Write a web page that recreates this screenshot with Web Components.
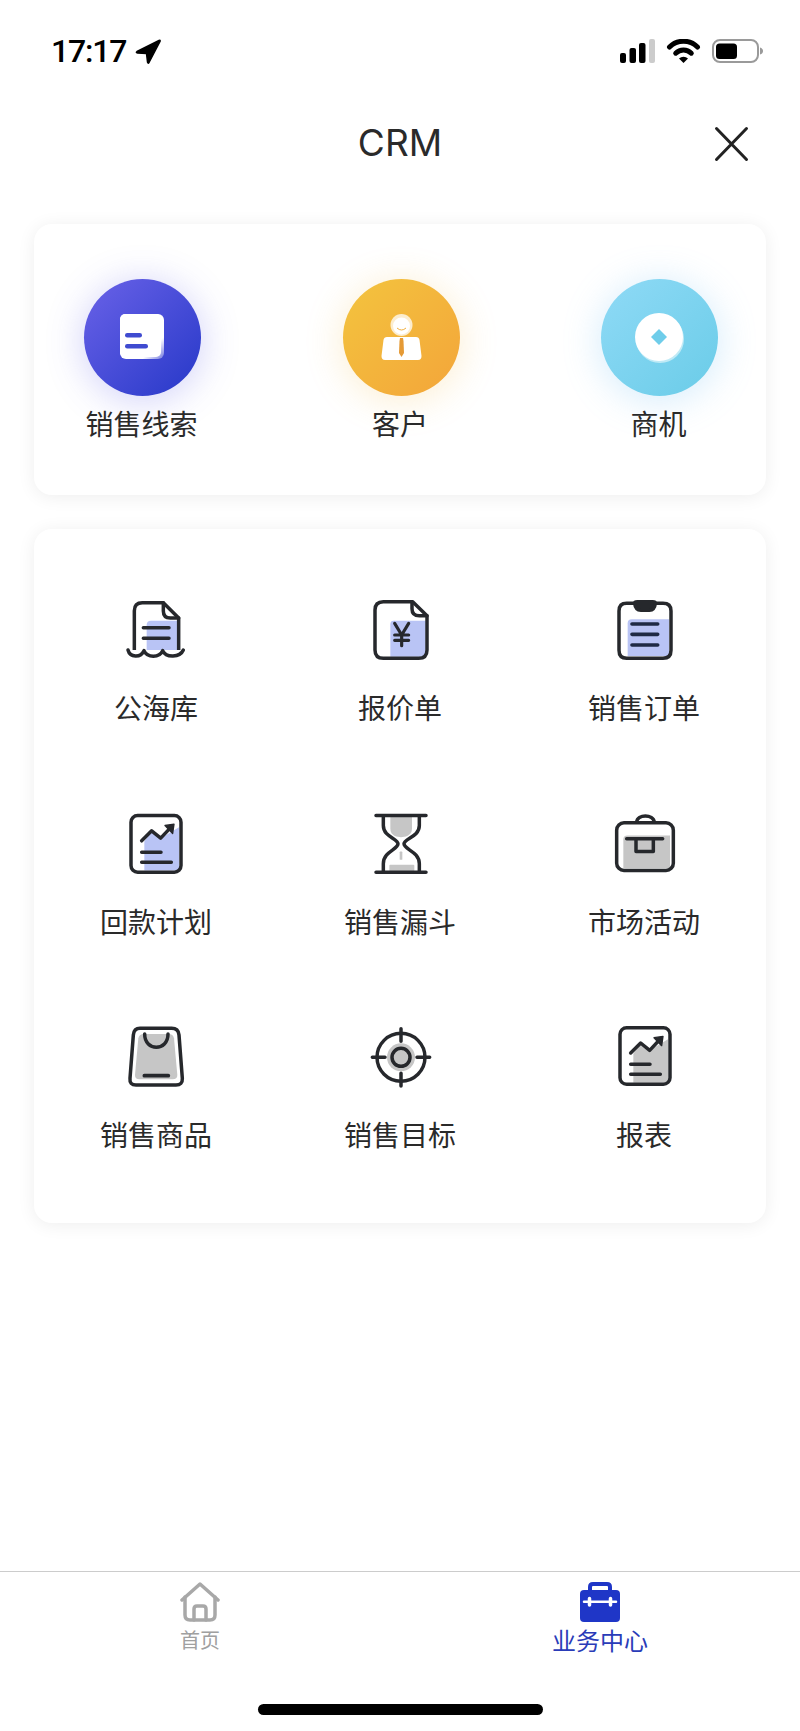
<!DOCTYPE html>
<html lang="zh">
<head>
<meta charset="utf-8">
<title>CRM</title>
<style>
  html, body { margin: 0; background: #fff; }
  body { font-family: "Noto Sans CJK SC", "Liberation Sans", sans-serif; color: #2a2a2a; }
</style>
</head>
<body>
<crm-page>
  <status-bar slot="top" time="17:17"></status-bar>
  <nav-header slot="top" title="CRM"></nav-header>

  <crm-card style="--pad: 55px 48px 52px 50px">
    <div style="display:flex;justify-content:space-between">
      <shortcut-item label="销售线索" tone="indigo">
        <svg width="117" height="117" viewBox="0 0 117 117">
          <defs><linearGradient id="fade" x1="0.75" y1="0.75" x2="1" y2="1"><stop offset="0" stop-color="#fff"/><stop offset="1" stop-color="#fff" stop-opacity=".25"/></linearGradient></defs>
          <rect x="36" y="35" width="44" height="45" rx="6" fill="url(#fade)"/>
          <rect x="36" y="35" width="41" height="43" rx="5" fill="#fff"/>
          <rect x="41" y="54" width="17" height="4.500" rx="2.200" fill="#3f4bd0"/>
          <rect x="41" y="65" width="23" height="4.500" rx="2.200" fill="#3f4bd0"/>
        </svg>
      </shortcut-item>
      <shortcut-item label="客户" tone="amber">
        <svg width="117" height="117" viewBox="0 0 117 117">
          <circle cx="58.500" cy="46" r="11" fill="#fff" opacity=".75"/>
          <circle cx="58.500" cy="47" r="8.500" fill="#fff"/>
          <path d="M54 49q4.500 4 9 0" fill="none" stroke="#f0b040" stroke-width="1"/>
          <path d="M44 58H73Q76 58 76.500 61L78.500 77Q78.500 81 75 81H42Q38.500 81 38.500 77L40.500 61Q41 58 44 58Z" fill="#fff"/>
          <path d="M57 59H60L60.500 62L61 74L58.500 78L56 74L56.500 62Z" fill="#e59a35"/>
        </svg>
      </shortcut-item>
      <shortcut-item label="商机" tone="sky">
        <svg width="117" height="117" viewBox="0 0 117 117">
          <circle cx="59" cy="60" r="24" fill="#bfeaf6"/>
          <circle cx="58" cy="58" r="24" fill="#fff"/>
          <path d="M58 50L66 58L58 66L50 58Z" fill="#6fcdea"/>
        </svg>
      </shortcut-item>
    </div>
  </crm-card>

  <crm-card style="--pad: 51px 0 2px 0">
    <div style="display:grid;grid-template-columns:repeat(3,1fr);grid-auto-rows:213.5px">
      <grid-item label="公海库">
        <svg width="100" height="90" viewBox="18 0 300 270" fill="none" stroke="#26282c" stroke-width="10.500" stroke-linecap="round" stroke-linejoin="round">
          <path d="M140 135Q140 122 153 122H236V222H140Z" fill="#b9c4f5" stroke="none"/>
          <path d="M103 212V92Q103 68 127 68H190L236 114V212"/>
          <path d="M190 68V93Q190 114 211 114H236"/>
          <path d="M130 143H207M130 175H207"/>
          <path d="M84 210C90 233 122 234 132 212C142 234 178 234 188 212C198 234 240 233 250 210" fill="#fff"/>
        </svg>
      </grid-item>
      <grid-item label="报价单">
        <svg width="100" height="90" viewBox="-3 0 300 270" fill="none" stroke="#26282c" stroke-width="10.500" stroke-linecap="round" stroke-linejoin="round">
          <path d="M118 132Q118 122 128 122H224V230H118Z" fill="#b9c4f5" stroke="none"/>
          <path d="M185 65H97Q72 65 72 90V210Q72 235 97 235H203Q228 235 228 210V107Z"/>
          <path d="M183 66V86Q183 107 205 107H228"/>
          <path d="M131 130L152 165L173 130M131 165H173M131 181H173M152 165V197" stroke-width="9.500"/>
        </svg>
      </grid-item>
      <grid-item label="销售订单">
        <svg width="100" height="90" viewBox="-6 0 300 270" fill="none" stroke="#26282c" stroke-width="10.500" stroke-linecap="round" stroke-linejoin="round">
          <path d="M95 130Q95 118 107 118H219V228H95Z" fill="#b9c4f5" stroke="none"/>
          <path d="M115 70H92Q69 70 69 93V211Q69 235 92 235H201Q225 235 225 211V93Q225 70 201 70H178"/>
          <path d="M116 70Q118 90 135 91H160Q176 90 178 70Q178 65 170 65H124Q116 65 116 70Z" fill="#26282c"/>
          <path d="M108 132H185M108 163H185M108 195H185" stroke="#1f2a44" stroke-width="11"/>
        </svg>
      </grid-item>
      <grid-item label="回款计划">
        <svg width="100" height="90" viewBox="18 -4.500 300 270" fill="none" stroke="#26282c" stroke-width="10.500" stroke-linecap="round" stroke-linejoin="round">
          <path d="M133 138L155 106L182 128L237 95V225H133Z" fill="#b9c4f5" stroke="none"/>
          <rect x="93" y="60" width="150" height="170" rx="20"/>
          <path d="M125 136L155 106L182 128L214 94"/>
          <path d="M195 90L222 86L218 114Z" fill="#26282c" stroke-width="4"/>
          <path d="M125 170H183M125 200H214"/>
        </svg>
      </grid-item>
      <grid-item label="销售漏斗">
        <svg width="100" height="90" viewBox="-3 -4.500 300 270" fill="none" stroke="#26282c" stroke-width="10.500" stroke-linecap="round" stroke-linejoin="round">
          <path d="M118 64H183V100C183 122 160 125 150 125C140 125 118 122 118 100Z" fill="#c6c6c6" stroke="none"/>
          <rect x="115" y="208" width="75" height="20" rx="3" fill="#c6c6c6" stroke="none"/>
          <rect x="146" y="168" width="8" height="25" rx="2" fill="#c6c6c6" stroke="none"/>
          <path d="M97 62V90C97 125 141 128 141 145C141 162 97 168 97 205V230"/>
          <path d="M205 62V90C205 125 159 128 159 145C159 162 205 168 205 205V230"/>
          <path d="M75 60H225M75 230H225"/>
        </svg>
      </grid-item>
      <grid-item label="市场活动">
        <svg width="100" height="90" viewBox="-6 -4.500 300 270" fill="none" stroke="#26282c" stroke-width="10.500" stroke-linecap="round" stroke-linejoin="round">
          <path d="M82 132Q82 120 94 120H222V218H82Z" fill="#c6c6c6" stroke="none"/>
          <rect x="62" y="82" width="170" height="143" rx="22"/>
          <path d="M122 80C124 55 172 55 175 80"/>
          <path d="M92 130H200M120 132V168H172V132"/>
        </svg>
      </grid-item>
      <grid-item label="销售商品">
        <svg width="100" height="90" viewBox="18 -9 300 270" fill="none" stroke="#26282c" stroke-width="10.500" stroke-linecap="round" stroke-linejoin="round">
          <path d="M133 72H205Q220 72 222 85L232 195Q232 208 218 208H118Q105 208 105 195L115 85Q117 72 133 72Z" fill="#c6c6c6" stroke="none"/>
          <path d="M120 55H215Q235 55 237 75L247 205Q248 225 228 225H108Q88 225 90 205L100 75Q102 55 120 55Z"/>
          <path d="M134 72C134 125 204 125 204 72"/>
          <path d="M133 197H205" stroke-width="11"/>
        </svg>
      </grid-item>
      <grid-item label="销售目标">
        <svg width="100" height="90" viewBox="-3 -9 300 270" fill="none" stroke="#26282c" stroke-width="10.500" stroke-linecap="round" stroke-linejoin="round">
          <circle cx="150" cy="142" r="42" fill="#c6c6c6" stroke="none"/>
          <circle cx="150" cy="142" r="72"/>
          <circle cx="150" cy="142" r="27"/>
          <path d="M150 56V94M150 190V228M64 142H102M198 142H236"/>
        </svg>
      </grid-item>
      <grid-item label="报表">
        <svg width="100" height="90" viewBox="-6 -9 300 270" fill="none" stroke="#26282c" stroke-width="10.500" stroke-linecap="round" stroke-linejoin="round">
          <g transform="translate(-21 -7)">
            <path d="M133 138L155 106L182 128L237 95V225H133Z" fill="#c6c6c6" stroke="none"/>
            <rect x="93" y="60" width="150" height="170" rx="20"/>
            <path d="M125 136L155 106L182 128L214 94"/>
            <path d="M195 90L222 86L218 114Z" fill="#26282c" stroke-width="4"/>
            <path d="M125 170H183M125 200H214"/>
          </g>
        </svg>
      </grid-item>
    </div>
  </crm-card>

  <tab-bar slot="bottom">
    <tab-item label="首页">
      <svg width="40" height="40" viewBox="0 0 40 40" fill="none" stroke="#a8a8a8" stroke-width="3.500" stroke-linecap="round" stroke-linejoin="round">
        <path d="M2 18L20 2L38 18"/>
        <path d="M5 15V33Q5 38 10 38H30Q35 38 35 33V15"/>
        <path d="M14 38V27Q14 24 17 24H23Q26 24 26 27V38"/>
      </svg>
    </tab-item>
    <tab-item label="业务中心" active>
      <svg width="40" height="40" viewBox="0 0 40 40">
        <path d="M10 10V5Q10 2 13 2H27Q30 2 30 5V10" fill="none" stroke="#1f36c7" stroke-width="4"/>
        <rect x="0" y="8" width="40" height="32" rx="4" fill="#1f36c7"/>
        <path d="M4 19.700H36" stroke="#fff" stroke-width="2.500" stroke-linecap="round"/>
        <path d="M9.500 16.500V23M30.500 16.500V23" stroke="#fff" stroke-width="3.500" stroke-linecap="round"/>
      </svg>
    </tab-item>
  </tab-bar>
</crm-page>

<script>
// page frame: top bars, cards in the middle, tab bar at the bottom
class CrmPage extends HTMLElement {
  constructor() {
    super();
    this.attachShadow({ mode: "open" }).innerHTML = `
      <style>
        :host { display: flex; flex-direction: column; width: 800px; height: 1731px; overflow: hidden; background: #fff; }
        main { display: flex; flex-direction: column; gap: 34px; padding: 38px 34px 0 34px; flex: 1; }
      </style>
      <slot name="top"></slot>
      <main><slot></slot></main>
      <slot name="bottom"></slot>`;
  }
}

class StatusBar extends HTMLElement {
  constructor() {
    super();
    this.attachShadow({ mode: "open" }).innerHTML = `
      <style>
        :host { display: flex; align-items: center; height: 102px; box-sizing: border-box; padding: 38px 37px 38px 51px; font-family: Roboto, "Liberation Sans", sans-serif; color: #000; }
        .time { font-size: 32px; font-weight: 500; letter-spacing: -1.200px; line-height: 26px; }
        .arrow { margin-left: 9px; }
        .right { margin-left: auto; display: flex; align-items: center; gap: 11px; }
      </style>
      <span class="time"></span>
      <svg class="arrow" width="26" height="25" viewBox="0 0 26 25"><path d="M24 1.500L2 12.500Q0.500 13.500 2.500 14L11.500 14.500L12.500 23Q13 25 14 23.500L25 2.500Q25.500 0.800 24 1.500Z" fill="#000" stroke="#000" stroke-width="1.500" stroke-linejoin="round"/></svg>
      <div class="right">
        <svg width="35" height="24" viewBox="0 0 35 24">
          <rect x="0" y="14" width="6" height="10" rx="2" fill="#000"/>
          <rect x="9.500" y="9" width="6.500" height="15" rx="2" fill="#000"/>
          <rect x="19" y="4" width="6.500" height="20" rx="2" fill="#000"/>
          <rect x="29" y="0" width="6" height="24" rx="2" fill="#ccc"/>
        </svg>
        <svg width="35" height="24" viewBox="0 0 35 24">
          <path d="M3.500 8A19.800 19.800 0 0 1 31.500 8" fill="none" stroke="#000" stroke-width="5" stroke-linecap="round"/>
          <path d="M9.700 14.200A11 11 0 0 1 25.300 14.200" fill="none" stroke="#000" stroke-width="5" stroke-linecap="round"/>
          <path d="M17.500 24L13 19.500A6.400 6.400 0 0 1 22 19.500Z" fill="#000"/>
        </svg>
        <svg width="51" height="24" viewBox="0 0 51 24">
          <rect x="1" y="1" width="45" height="22" rx="7" fill="none" stroke="#9a9a9a" stroke-width="2"/>
          <rect x="4" y="4.500" width="21" height="15.500" rx="3.500" fill="#000"/>
          <path d="M48 8.500Q51 9.500 51 12T48 15.500Z" fill="#9a9a9a"/>
        </svg>
      </div>`;
    this.shadowRoot.querySelector(".time").textContent = this.getAttribute("time");
  }
}

class NavHeader extends HTMLElement {
  constructor() {
    super();
    this.attachShadow({ mode: "open" }).innerHTML = `
      <style>
        :host { display: grid; grid-template-columns: 1fr auto 1fr; align-items: center; height: 84px; padding-right: 51px; padding-left: 51px; font-family: Inter, "Liberation Sans", sans-serif; }
        h1 { margin: 0 0 4px; font-size: 37px; font-weight: 400; color: #2a2a2a; grid-column: 2; }
        svg { justify-self: end; grid-column: 3; }
      </style>
      <h1></h1>
      <svg width="36" height="36" viewBox="0 0 36 36"><path d="M3.500 2.500L33.500 33.500M33.500 2.500L3.500 33.500" stroke="#222" stroke-width="3" stroke-linecap="round"/></svg>`;
    this.shadowRoot.querySelector("h1").textContent = this.getAttribute("title");
  }
}

class CrmCard extends HTMLElement {
  constructor() {
    super();
    this.attachShadow({ mode: "open" }).innerHTML = `
      <style>
        :host { display: block; background: #fff; border-radius: 18px; padding: var(--pad); box-shadow: 0 2px 18px rgba(0,0,0,.07); }
      </style>
      <slot></slot>`;
  }
}

const TONES = {
  indigo: ["#6a62e8", "#2638c8", "rgba(88,88,232,.26)"],
  amber: ["#f3c43e", "#f3a53a", "rgba(243,180,60,.22)"],
  sky: ["#8fdaf6", "#6accE8", "rgba(110,190,245,.28)"]
};

class ShortcutItem extends HTMLElement {
  constructor() {
    super();
    const [from, to, glow] = TONES[this.getAttribute("tone")];
    this.attachShadow({ mode: "open" }).innerHTML = `
      <style>
        :host { display: flex; flex-direction: column; align-items: center; width: 117px; }
        .disc { width: 117px; height: 117px; border-radius: 50%; background: linear-gradient(135deg, ${from}, ${to}); box-shadow: 0 4px 36px 2px ${glow}; }
        ::slotted(svg) { display: block; }
        span { margin: 7px 2px 0 0; font-size: 28px; line-height: 40px; white-space: nowrap; color: #2a2a2a; }
      </style>
      <div class="disc"><slot></slot></div>
      <span></span>`;
    this.shadowRoot.querySelector("span").textContent = this.getAttribute("label");
  }
}

class GridItem extends HTMLElement {
  constructor() {
    super();
    this.attachShadow({ mode: "open" }).innerHTML = `
      <style>
        :host { display: flex; flex-direction: column; align-items: center; }
        ::slotted(svg) { display: block; }
        span { margin-top: 17px; font-size: 28px; line-height: 40px; color: #2a2a2a; }
      </style>
      <slot></slot>
      <span></span>`;
    this.shadowRoot.querySelector("span").textContent = this.getAttribute("label");
  }
}

class TabBar extends HTMLElement {
  constructor() {
    super();
    this.attachShadow({ mode: "open" }).innerHTML = `
      <style>
        :host { display: flex; flex-direction: column; align-items: center; border-top: 1px solid #ccc; height: 160px; box-sizing: border-box; }
        .tabs { display: grid; grid-template-columns: 1fr 1fr; width: 100%; height: 132px; box-sizing: border-box; padding-top: 10px; }
        .home { width: 285px; height: 11px; border-radius: 6px; background: #000; }
      </style>
      <div class="tabs"><slot></slot></div>
      <div class="home"></div>`;
  }
}

class TabItem extends HTMLElement {
  constructor() {
    super();
    const active = this.hasAttribute("active");
    this.attachShadow({ mode: "open" }).innerHTML = `
      <style>
        :host { display: flex; flex-direction: column; align-items: center; }
        ::slotted(svg) { display: block; }
        span { font-size: ${active ? 24 : 20}px; line-height: ${active ? 34 : 30}px; margin-top: ${active ? 1 : 3}px; color: ${active ? "#2a3cb8" : "#a0a0a0"}; }
      </style>
      <slot></slot>
      <span></span>`;
    this.shadowRoot.querySelector("span").textContent = this.getAttribute("label");
  }
}

customElements.define("crm-page", CrmPage);
customElements.define("status-bar", StatusBar);
customElements.define("nav-header", NavHeader);
customElements.define("crm-card", CrmCard);
customElements.define("shortcut-item", ShortcutItem);
customElements.define("grid-item", GridItem);
customElements.define("tab-bar", TabBar);
customElements.define("tab-item", TabItem);
</script>
</body>
</html>
